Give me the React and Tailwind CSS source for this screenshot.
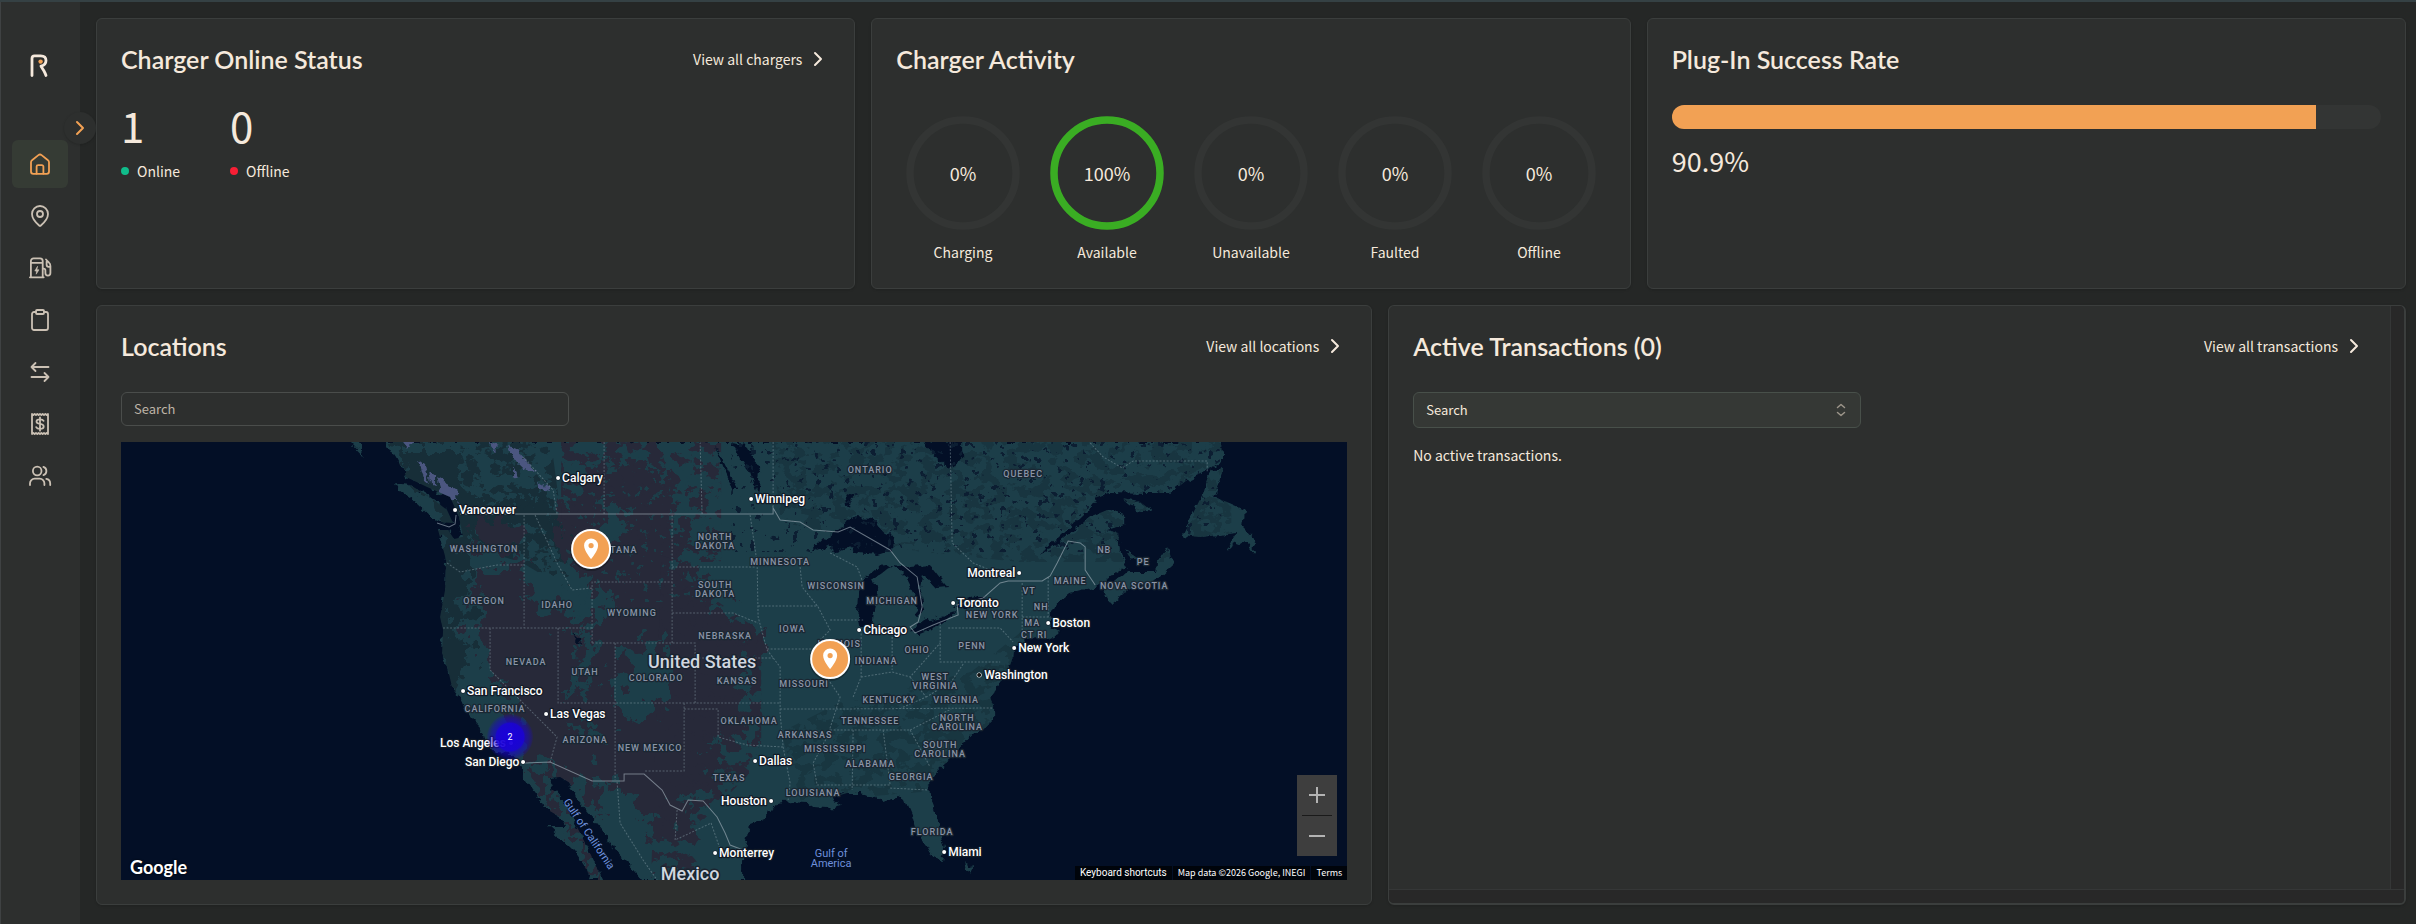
import React, { useState } from "react";
import { ChevronRight, Clipboard, MapPin } from "lucide-react";

const bodyFont = "font-['Noto_Sans_CJK_SC',sans-serif]";

const HomeIcon = () => (
  <svg viewBox="0 0 24 24" className="size-6" fill="none" stroke="currentColor" strokeWidth="1.8" strokeLinecap="round" strokeLinejoin="round">
    <path d="M3 10.2c0-.8.3-1.5 1-2l6.400-5.100a2.600 2.600 0 0 1 3.200 0L20 8.200c.7.5 1 1.200 1 2v9.300a2.300 2.300 0 0 1-2.300 2.300H5.300A2.300 2.300 0 0 1 3 19.500z" />
    <path d="M8.600 21.600v-7a1.500 1.500 0 0 1 1.500-1.500h3.800a1.500 1.500 0 0 1 1.500 1.500v7" />
  </svg>
);

const ChargerIcon = () => (
  <svg viewBox="0 0 24 24" className="size-6" fill="none" stroke="currentColor" strokeWidth="1.8" strokeLinecap="round" strokeLinejoin="round">
    <path d="M2.900 21.300V5a2.600 2.600 0 0 1 2.600-2.600h6.600A2.600 2.600 0 0 1 14.700 5v16.300M1.900 21.300h13.800M3 6.800h11.600" />
    <path d="M14.800 12.600h.8a1.800 1.800 0 0 1 1.800 1.800v2.700a2.500 2.500 0 0 0 5 0v-7.200c0-1.300-.5-2.400-1.400-3.200l-3-3.200M18.600 5.600v3.200a2 2 0 0 0 2 2h1.600" />
    <path d="M9.400 10.600 6.800 15h1.800l-.4 3.200 2.800-4.400H9.100z" fill="currentColor" strokeWidth="0.600" />
  </svg>
);

const ArrowsIcon = () => (
  <svg viewBox="0 0 24 24" className="size-6" fill="none" stroke="currentColor" strokeWidth="1.8" strokeLinecap="round" strokeLinejoin="round">
    <path d="M20.500 7H3.500m4-4-4 4 4 4M3.500 17h17m-4-4 4 4-4 4" />
  </svg>
);

const ReceiptIcon = () => (
  <svg viewBox="0 0 24 24" className="size-6" fill="none" stroke="currentColor" strokeWidth="1.8" strokeLinejoin="round">
    <path d="M4 22V2l1.300 1 1.350-1L8 3l1.300-1 1.350 1L12 2l1.350 1 1.300-1L16 3l1.350-1 1.300 1L20 2v20l-1.350-1-1.300 1L16 21l-1.350 1-1.300-1L12 22l-1.350-1-1.350 1L8 21l-1.350 1-1.350-1z" />
    <path d="M15.600 8.800c-.5-1-1.700-1.500-3.600-1.500-2.200 0-3.500.8-3.500 2.200 0 1.700 1.500 2.100 3.500 2.400 2.200.3 3.700.9 3.700 2.500 0 1.500-1.400 2.400-3.700 2.400-2 0-3.300-.6-3.800-1.700M12 5.300v13.400" strokeLinecap="round" />
  </svg>
);

const UsersIcon = () => (
  <svg viewBox="0 0 24 24" className="size-6" fill="none" stroke="currentColor" strokeWidth="1.8" strokeLinecap="round" strokeLinejoin="round">
    <circle cx="9.200" cy="7" r="4.300" />
    <path d="M2 21v-1.700A4.600 4.600 0 0 1 6.600 14.700h5.200a4.600 4.600 0 0 1 4.600 4.600V21M15.400 2.900a4.300 4.300 0 0 1 0 8.200M18.300 14.900a4.600 4.600 0 0 1 3.900 4.500V21" />
  </svg>
);

const navItems = [
  { label: "Home", icon: <HomeIcon />, active: true },
  { label: "Locations", icon: <MapPin className="size-6" strokeWidth={1.8} /> },
  { label: "Chargers", icon: <ChargerIcon /> },
  { label: "Reports", icon: <Clipboard className="size-6" strokeWidth={1.8} /> },
  { label: "Transactions", icon: <ArrowsIcon /> },
  { label: "Billing", icon: <ReceiptIcon /> },
  { label: "Users", icon: <UsersIcon /> }
];

const activity = [
  { label: "Charging", value: 0 },
  { label: "Available", value: 100 },
  { label: "Unavailable", value: 0 },
  { label: "Faulted", value: 0 },
  { label: "Offline", value: 0 }
];

// [name, text x, y, dot x]
const cities = [
  ["Calgary", 441, 36, 437],
  ["Vancouver", 338, 68, 334],
  ["Winnipeg", 634, 57, 630],
  ["San Francisco", 346, 249, 342],
  ["Las Vegas", 429, 272, 425],
  ["Los Angeles", 319, 301, 390],
  ["San Diego", 344, 320, 402],
  ["Dallas", 638, 319, 634],
  ["Houston", 600, 359, 650],
  ["Monterrey", 598, 411, 594],
  ["Miami", 827, 410, 823],
  ["Chicago", 742, 188, 738],
  ["Toronto", 836, 161, 832],
  ["Montreal", 846, 131, 898],
  ["Boston", 931, 181, 927],
  ["New York", 897, 206, 893]
];

const states = [
  ["WASHINGTON", 363, 107],
  ["OREGON", 363, 159],
  ["IDAHO", 436, 163],
  ["MONTANA", 491, 108],
  ["WYOMING", 511, 171],
  ["NEVADA", 405, 220],
  ["UTAH", 464, 230],
  ["COLORADO", 535, 236],
  ["KANSAS", 616, 239],
  ["NEBRASKA", 604, 194],
  ["CALIFORNIA", 374, 267],
  ["ARIZONA", 464, 298],
  ["NEW MEXICO", 529, 306],
  ["NORTH", 594, 95],
  ["DAKOTA", 594, 104],
  ["SOUTH", 594, 143],
  ["DAKOTA", 594, 152],
  ["MINNESOTA", 659, 120],
  ["WISCONSIN", 715, 144],
  ["MICHIGAN", 771, 159],
  ["IOWA", 671, 187],
  ["ILLINOIS", 718, 202],
  ["INDIANA", 755, 219],
  ["OHIO", 796, 208],
  ["PENN", 851, 204],
  ["MISSOURI", 683, 242],
  ["KENTUCKY", 768, 258],
  ["WEST", 814, 235],
  ["VIRGINIA", 814, 244],
  ["VIRGINIA", 835, 258],
  ["TENNESSEE", 749, 279],
  ["NORTH", 836, 276],
  ["CAROLINA", 836, 285],
  ["SOUTH", 819, 303],
  ["CAROLINA", 819, 312],
  ["ARKANSAS", 684, 293],
  ["OKLAHOMA", 628, 279],
  ["MISSISSIPPI", 714, 307],
  ["ALABAMA", 749, 322],
  ["GEORGIA", 790, 335],
  ["LOUISIANA", 692, 351],
  ["TEXAS", 608, 336],
  ["FLORIDA", 811, 390],
  ["ONTARIO", 749, 28],
  ["QUEBEC", 902, 32],
  ["NB", 983, 108],
  ["PE", 1022, 120],
  ["MAINE", 949, 139],
  ["NOVA SCOTIA", 1013, 144],
  ["VT", 908, 149],
  ["NH", 920, 165],
  ["NEW YORK", 871, 173],
  ["MA", 911, 181],
  ["CT RI", 913, 193]
];

const land =
  "M265 0L275 15 285 35 306 45 329 55 338 75 342 95 333 97 327 88 317 88 325 118 324 148 319 175 322 188 321 211 327 228 331 245 339 255 347 273 359 285 365 303 374 310 389 311 401 325 406 340 417 355 427 368 439 375 446 385 427 385 439 396 452 408 461 421 472 438 481 438 469 411 459 391 449 371 441 358 432 348 428 336 439 335 449 341 456 358 472 376 482 388 492 408 506 421 521 438 622 438 622 415 627 388 631 381 646 375 656 361 669 359 686 360 692 365 706 366 712 365 721 363 709 356 726 351 739 351 756 355 762 360 776 355 786 361 792 375 796 388 804 401 812 415 822 418 824 408 819 385 809 358 808 338 819 326 832 315 839 305 852 291 862 288 872 278 872 265 869 255 879 241 891 221 892 205 906 198 929 196 939 191 929 185 931 171 936 161 949 151 972 145 996 131 1006 125 999 111 997 91 986 88 1002 83 1002 73 986 68 969 75 949 91 929 108 922 110 942 91 966 68 976 55 989 50 1026 51 1049 51 1066 38 1086 28 1101 18 1100 0Z" +
  "M1102 26L1089 28 1082 51 1072 71 1061 93 1079 95 1099 93 1116 91 1106 108 1122 98 1132 111 1134 98 1122 85 1124 68 1106 60 1092 55 1099 38Z" +
  "M982 150L989 163 1002 151 1026 141 1039 135 1052 123 1047 106 1037 120 1036 130 1006 130Z" +
  "M1004 108L1016 116 1029 120 1009 116ZM1002 56L1019 60 1032 70 1016 68Z" +
  "M274 41L289 43 309 55 326 68 332 81 316 80 296 61 279 50ZM229 0L237 0 243 15Z" +
  "M844 418L848 420 851 433 846 428Z";

const lakes =
  "M689 111L699 100 712 90 727 80 732 75 752 76 762 90 772 95 771 108 756 113 739 111 726 106 712 111 709 103Z" +
  "M744 135L756 125 772 123 762 131 752 138 756 148 753 168 751 185 739 185 736 168 737 148Z" +
  "M772 123L789 125 809 123 826 145 816 146 802 131 799 145 804 168 796 175 794 155 784 135Z" +
  "M789 188L802 178 836 171 816 185 796 193ZM836 160L856 155 866 155 852 165 832 166Z" +
  "M611 1L626 3 639 31 636 51 629 31 619 18ZM594 5L602 18 617 48 612 48 604 31Z" +
  "M802 0L841 0 841 18 829 28 816 16ZM724 51L732 53 731 63 726 64ZM450 192L458 198 459 205Z";

const dryLand =
  "M442 68L486 15 546 28 549 75 559 131 592 135 596 165 626 178 639 205 626 221 619 265 629 288 596 298 579 355 559 365 579 398 539 405 499 341 466 341 439 331 426 321 406 308 392 271 369 228 356 188 352 135 402 121 406 155 466 185 472 141 432 98Z" +
  "M425 325L408 325 440 380 470 438 480 438 440 360ZM350 75L395 80 400 115 355 110ZM440 330L485 340 475 370Z";

const stateLines =
  "M403 73V186M326 121L339 130 376 123H403M322 186H471M369 186V228L436 295 429 320M437 186V261H659M471 201V140H551M471 201H574V261M551 73V201M414 73L436 121 451 148 471 146M551 125H634M551 171H612L637 181M574 216H652M494 201V338M563 261V329H523M563 267H597V295L626 303 662 305" +
  "M629 73L636 121 637 175 646 208 659 225V271L662 305 669 341 667 358M637 164H697M679 125L681 145 697 165 709 188 696 201V221L719 255 706 295 692 321 696 343H727M646 207H696M709 178H742M659 267H712L872 266M740 188V235L732 255M771 188V228M740 235L771 230 789 235 819 201M819 181V220H879M827 186H879L892 200M709 288H789M732 288L731 348M762 288L769 343H727M769 346L807 348M789 288L809 325M789 235L805 255 780 266M842 222L830 240 805 255M789 288L830 267" +
  "M483 0V72M579 0L581 72M652 0V66M829 0L831 101 852 121 886 135M901 141V188M927 135V175M901 175H930M969 1L982 15 1001 26 1012 19H1086V30M709 111L736 125 742 141M402 15L432 48 436 72M496 340L499 381 522 418 536 438M556 368L554 398 590 381M590 381L600 410";

const countryLines =
  "M339 72H652V66L659 78 679 80 692 88 717 90 729 85 769 108 779 121 796 135 801 165 797 180 789 185 794 191 812 183 837 173 836 163 862 156 879 141 887 139H921L929 134 936 121 947 99 959 101 964 105V128L974 143" +
  "M316 81L328 85 334 82 335 73M404 321L429 320 471 339H503V332H523L541 348 549 363 561 369 567 358 582 359 596 375 604 391 609 403 622 408";

const Pin = ({ x, y }) => (
  <g transform={`translate(${x} ${y})`}>
    <circle r="21" fill="#000" opacity="0.25" cy="1" />
    <circle r="19" fill="#f2a154" stroke="#fff" strokeWidth="2" />
    <path fillRule="evenodd" fill="#fff" d="M0 -10.500a7 7 0 0 0-7 7C-7 2 0 10 0 10S7 2 7-3.500a7 7 0 0 0-7-7zm0 4.500a2.600 2.600 0 1 1 0 5.200 2.600 2.600 0 0 1 0-5.200z" />
  </g>
);

const MapCanvas = () => (
  <svg
    viewBox="0 0 1226 438"
    preserveAspectRatio="xMidYMid slice"
    className="block h-full w-full font-[Roboto,sans-serif]"
    role="img"
    aria-label="Map of charger locations"
  >
    <defs>
      <filter id="coast" x="0" y="0" width="100%" height="100%" colorInterpolationFilters="sRGB">
        <feTurbulence type="fractalNoise" baseFrequency="0.12" numOctaves="3" seed="4" />
        <feDisplacementMap in="SourceGraphic" scale="9" xChannelSelector="R" yChannelSelector="G" />
      </filter>
      <filter id="ragged" x="-10%" y="-10%" width="120%" height="120%" colorInterpolationFilters="sRGB">
        <feTurbulence type="fractalNoise" baseFrequency="0.06" numOctaves="4" seed="9" />
        <feDisplacementMap in="SourceGraphic" scale="60" xChannelSelector="R" yChannelSelector="G" />
      </filter>
      <filter id="patches" x="0" y="0" width="100%" height="100%" colorInterpolationFilters="sRGB">
        <feTurbulence type="fractalNoise" baseFrequency="0.07 0.09" numOctaves="4" seed="12" result="n" />
        <feColorMatrix in="n" type="matrix" values="0 0 0 0 0  0 0 0 0 0  0 0 0 0 0  30 0 0 0 -15.500" result="m" />
        <feComposite in="SourceGraphic" in2="m" operator="in" />
      </filter>
      <filter id="specks" x="0" y="0" width="100%" height="100%" colorInterpolationFilters="sRGB">
        <feTurbulence type="fractalNoise" baseFrequency="0.14" numOctaves="3" seed="21" result="n" />
        <feColorMatrix in="n" type="matrix" values="0 0 0 0 0  0 0 0 0 0  0 0 0 0 0  0 30 0 0 -20" result="m" />
        <feComposite in="SourceGraphic" in2="m" operator="in" />
      </filter>
      <clipPath id="landClip">
        <path d={land} />
      </clipPath>
      <radialGradient id="cluster">
        <stop offset="0" stopColor="#1a00dc" />
        <stop offset="0.600" stopColor="#1a00dc" stopOpacity="0.900" />
        <stop offset="0.660" stopColor="#1a00dc" stopOpacity="0.600" />
        <stop offset="0.840" stopColor="#1a00dc" stopOpacity="0.400" />
        <stop offset="1" stopColor="#1a00dc" stopOpacity="0.100" />
      </radialGradient>
    </defs>

    <rect width="1226" height="438" fill="#030f26" />
    <path d={land} fill="#1c3e49" filter="url(#coast)" />

    <g clipPath="url(#landClip)">
      {/* forests */}
      <path d="M650 0H1110V120H900L800 110 660 80Z" fill="#183540" filter="url(#patches)" />
      <path d="M660 290L720 260 850 230 900 190 870 280 800 350 680 360Z" fill="#183640" filter="url(#patches)" />
      <path d="M265 0H340L350 60 430 60 440 110 405 80 350 90 345 180 340 250 318 250 316 80Z" fill="#172e38" filter="url(#ragged)" />
      <path d="M340 0H430L450 150 400 120 330 100Z" fill="#172e38" filter="url(#patches)" />
      {/* dry ground */}
      <path d={dryLand} fill="#272939" filter="url(#ragged)" />
      <path d="M440 0H600V120H560L440 80Z" fill="#272939" filter="url(#patches)" />
      <path d="M540 120L640 190 640 320 560 400 590 438 530 438Z" fill="#272939" filter="url(#patches)" />
      {/* mountains */}
      <g fill="#1c3e49" filter="url(#ragged)">
        <path d="M512 205L536 195 559 221 542 265 512 278 499 265 492 235Z" />
        <path d="M462 190L478 200 464 250 446 256ZM460 150L484 140 480 184 464 180Z" />
        <path d="M446 280L470 284 496 304 490 308 460 296ZM480 60L508 70 500 100 480 90Z" />
      </g>
      <path d="M440 20H600V160H440Z" fill="#1c3e49" filter="url(#specks)" />
      <g fill="#4b5680" filter="url(#coast)">
        <path d="M281 0L292 0 288 8ZM298 18L304 22 308 42 303 38ZM308 28L314 32 314 44 310 42ZM316 36L334 46 336 58 322 56ZM336 60L342 66 339 72Z" />
        <path d="M368 0L378 4 372 10ZM388 4L398 8 404 20 416 28 406 30 394 18ZM392 24L398 36 392 34ZM416 40L428 46 428 50 418 46Z" />
      </g>
    </g>

    <path d={lakes} fill="#030f26" filter="url(#coast)" />
    <g clipPath="url(#landClip)">
      <path d="M610 0H1100V110H610Z" fill="#0c1e32" filter="url(#specks)" />
    </g>

    <path d={stateLines} fill="none" stroke="#8fa3ad" strokeOpacity="0.450" strokeWidth="1" strokeDasharray="2 1.500" />
    <path d={countryLines} fill="none" stroke="#a9b6c0" strokeOpacity="0.600" strokeWidth="1" />

    <g fontSize="9" fontWeight="500" fill="#8a94a6" stroke="#1a2733" strokeWidth="2.500" strokeLinejoin="round" textAnchor="middle" className="tracking-[1px] [paint-order:stroke]">
      {states.map(([name, x, y]) => (
        <text key={`${name}-${x}-${y}`} x={x} y={y + 3}>
          {name}
        </text>
      ))}
    </g>

    <g fontSize="18" fontWeight="500" fill="#d0d6df" stroke="#1a2430" strokeWidth="3" strokeLinejoin="round" textAnchor="middle" className="[paint-order:stroke]">
      <text x="581" y="226">United States</text>
      <text x="569" y="438">Mexico</text>
    </g>

    <g fontSize="11" fill="#6e8fdb" textAnchor="middle">
      <text x="710" y="415">Gulf of</text>
      <text x="710" y="425">America</text>
      <text transform="translate(465 394) rotate(56)">Gulf of California</text>
    </g>

    <g fontSize="12" fontWeight="500" fill="#fff" stroke="#111a26" strokeWidth="2.500" strokeLinejoin="round" className="[paint-order:stroke]">
      {cities.map(([name, x, y, dot]) => (
        <g key={name}>
          <circle cx={dot} cy={y} r="2" strokeWidth="1" />
          <text x={x} y={y + 4}>
            {name}
          </text>
        </g>
      ))}
      <circle cx="858" cy="233" r="2" fill="#111" stroke="#fff" strokeWidth="1" />
      <text x="863" y="237">Washington</text>
    </g>

    <circle cx="389" cy="295" r="23" fill="url(#cluster)" />
    <text x="389" y="298" fontSize="9" fill="#fff" textAnchor="middle">2</text>
    <Pin x={470} y={107} />
    <Pin x={709} y={217} />
  </svg>
);

const Card = ({ className = "", children }) => (
  <section className={`rounded-md border border-[#3b3e3d] bg-[#2d2f2e] shadow-sm ${className}`}>{children}</section>
);

const CardHeader = ({ title, link }) => (
  <div className="flex h-8 items-center justify-between">
    <h2 className="font-[Lato,sans-serif] text-[25px] leading-8 font-semibold">{title}</h2>
    {link && (
      <a href="#" className="flex items-center gap-1 leading-[22px]">
        {link}
        <ChevronRight className="size-6" />
      </a>
    )}
  </div>
);

const Stat = ({ value, label, dot }) => (
  <div>
    <p className="text-[42px] leading-12">{value}</p>
    <p className="mt-[10px] flex items-center gap-2 leading-6">
      <span className={`size-2 rounded-full ${dot}`} />
      {label}
    </p>
  </div>
);

const Ring = ({ value, label }) => (
  <div className="flex w-[114px] flex-col items-center gap-[10px]">
    <div className="relative flex size-[114px] items-center justify-center">
      <svg viewBox="0 0 114 114" className="absolute inset-0 -rotate-90" fill="none" strokeWidth="7.500">
        <circle cx="57" cy="57" r="53" stroke="#333534" />
        {value > 0 && <circle cx="57" cy="57" r="53" stroke="#3aad23" pathLength="100" strokeDasharray={`${value} 100`} />}
      </svg>
      <span className="relative text-[18px] leading-6">{value}%</span>
    </div>
    <span className="leading-6">{label}</span>
  </div>
);

const Sidebar = () => (
  <aside className="relative w-20 shrink-0 bg-[#2d2f2e] shadow-[inset_1px_0_0_#3f4243]">
    <div className="flex flex-col items-center pt-[50px]">
      <svg viewBox="2 0 20 26" className="h-[26px] w-5" fill="none" stroke="#f5e9dc" strokeWidth="2.800" strokeLinecap="round" strokeLinejoin="round">
        <path d="M4 23.500V6.500C4 4.500 4.800 3.800 6.500 3.800h6.200c3.300 0 5.300 1.800 5.300 4.700 0 2.800-1.700 4.800-5 5.700l3 4.800c.7 1.300 1.300 2.500 2 4.500" />
        <circle cx="12.600" cy="9.600" r="2.200" fill="#f2a154" stroke="none" />
      </svg>
      <nav className="mt-[62px] flex w-14 flex-col gap-1">
        {navItems.map((item) => (
          <a
            key={item.label}
            href="#"
            aria-label={item.label}
            className={`flex h-12 items-center justify-center rounded-md ${
              item.active ? "bg-[#353b34] text-[#f2a154]" : "text-[#cbc1b4]"
            }`}
          >
            {item.icon}
          </a>
        ))}
      </nav>
    </div>
    <button
      type="button"
      aria-label="Expand menu"
      className="absolute top-[110px] -right-4 flex size-8 items-center justify-center rounded-full bg-[#2d2f2e] text-[#f2a154] shadow"
    >
      <ChevronRight className="size-6" />
    </button>
  </aside>
);

export default function App() {
  const [search, setSearch] = useState("");
  const rate = 90.9;

  return (
    <div className={`flex min-h-screen border-t-2 border-[#354144] bg-[#252726] text-[14px] text-[#f5e9dc] ${bodyFont}`}>
      <Sidebar />

      <main className="flex min-w-0 flex-1 flex-col gap-4 py-4 pr-[10px] pl-4">
        <div className="grid grid-cols-3 gap-4">
          <Card className="p-6">
            <CardHeader title="Charger Online Status" link="View all chargers" />
            <div className="mt-[26px] flex gap-[50px]">
              <Stat value={1} label="Online" dot="bg-[#10bd8b]" />
              <Stat value={0} label="Offline" dot="bg-[#f71f35]" />
            </div>
          </Card>

          <Card className="p-6">
            <CardHeader title="Charger Activity" />
            <div className="mt-[41px] flex justify-center gap-[30px]">
              {activity.map((item) => (
                <Ring key={item.label} {...item} />
              ))}
            </div>
          </Card>

          <Card className="p-6">
            <CardHeader title="Plug-In Success Rate" />
            <div className="mt-[30px] h-6 overflow-hidden rounded-full bg-[#333534]">
              <div className="h-full bg-[#f2a154]" style={{ width: `${rate}%` }} />
            </div>
            <p className="mt-[14px] text-[27px] leading-9">{rate}%</p>
          </Card>
        </div>

        <div className="grid grid-cols-9 gap-4">
          <Card className="col-span-5 p-6">
            <CardHeader title="Locations" link="View all locations" />
            <input
              type="text"
              aria-label="Search locations"
              placeholder="Search"
              value={search}
              onChange={(e) => setSearch(e.target.value)}
              className="mt-[30px] block h-[34px] w-full max-w-md rounded-md border border-[#4a4d4b] bg-transparent px-3 pb-[2px] text-[13px] leading-5 placeholder:text-[#bdb3a6]"
            />
            <div className="relative mt-4 h-[438px] overflow-hidden">
              <MapCanvas />
              <span className="absolute bottom-px left-[9px] font-[Lato,sans-serif] text-[18px] leading-6 font-bold text-white [text-shadow:0_0_2px_#000]">
                Google
              </span>
              <div className="absolute right-[10px] bottom-6 flex w-10 flex-col items-center bg-[#3e3e3e]">
                <button type="button" aria-label="Zoom in" className="flex size-10 items-center justify-center">
                  <svg viewBox="0 0 18 18" className="size-[18px]" stroke="#b3b3b3" strokeWidth="2">
                    <path d="M1 9h16M9 1v16" />
                  </svg>
                </button>
                <div className="h-px w-[30px] bg-[#1a1a1a]" />
                <button type="button" aria-label="Zoom out" className="flex size-10 items-center justify-center">
                  <svg viewBox="0 0 18 18" className="size-[18px]" stroke="#b3b3b3" strokeWidth="2">
                    <path d="M1 9h16" />
                  </svg>
                </button>
              </div>
              <div className="absolute right-0 bottom-0 flex gap-px text-[9px] leading-[14px] text-white">
                <button type="button" className="bg-black/70 px-[5px] font-[Roboto,sans-serif] text-[10px]">
                  Keyboard shortcuts
                </button>
                <span className="bg-black/70 px-[5px]">Map data ©2026 Google, INEGI</span>
                <a href="#" className="bg-black/70 px-[5px]">
                  Terms
                </a>
              </div>
            </div>
          </Card>

          {/* scrollable panel with its two scrollbar tracks */}
          <Card className="col-span-4 flex flex-col overflow-hidden border-r-2 border-b-2">
            <div className="flex flex-1">
              <div className="flex-1 p-6">
                <CardHeader title="Active Transactions (0)" link="View all transactions" />
                <div className="relative mt-[30px] max-w-md">
                  <select
                    aria-label="Search transactions"
                    className="block h-9 w-full appearance-none rounded-md border border-[#48504a] bg-[#353835] px-3 pb-px text-[13px] leading-5"
                  >
                    <option>Search</option>
                  </select>
                  <svg viewBox="0 0 20 20" className="pointer-events-none absolute top-2 right-[10px] size-5" fill="none" stroke="#9c958a" strokeWidth="1.500" strokeLinecap="round" strokeLinejoin="round">
                    <path d="m6.500 7.500 3.500-3 3.500 3M6.500 12.500l3.500 3 3.500-3" />
                  </svg>
                </div>
                <p className="mt-[15px] leading-6">No active transactions.</p>
              </div>
              <div className="w-[14px] border-l border-[#353737] bg-[#282828]" />
            </div>
            <div className="h-[14px] border-t border-[#353737] bg-[#282828]" />
          </Card>
        </div>
      </main>
    </div>
  );
}
